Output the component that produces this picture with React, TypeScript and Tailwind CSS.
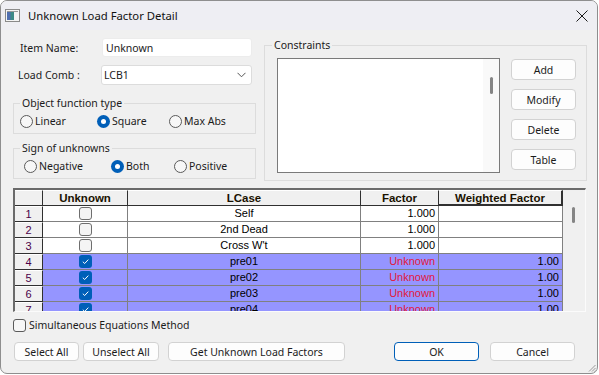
import React from "react";

type Row = { n: number; checked: boolean; lcase: string; factor: string; weighted: string; hl: boolean };

const ROWS: Row[] = [
  { n: 1, checked: false, lcase: "Self", factor: "1.000", weighted: "", hl: false },
  { n: 2, checked: false, lcase: "2nd Dead", factor: "1.000", weighted: "", hl: false },
  { n: 3, checked: false, lcase: "Cross W't", factor: "1.000", weighted: "", hl: false },
  { n: 4, checked: true, lcase: "pre01", factor: "Unknown", weighted: "1.00", hl: true },
  { n: 5, checked: true, lcase: "pre02", factor: "Unknown", weighted: "1.00", hl: true },
  { n: 6, checked: true, lcase: "pre03", factor: "Unknown", weighted: "1.00", hl: true },
  { n: 7, checked: true, lcase: "pre04", factor: "Unknown", weighted: "1.00", hl: true },
];

function Radio({ on, label, width }: { on?: boolean; label: string; width: string }) {
  return (
    <div className={`flex items-center ${width}`}>
      {on ? (
        <span className="w-[13px] h-[13px] rounded-full bg-[#005fb8] flex items-center justify-center">
          <span className="w-[5px] h-[5px] rounded-full bg-white" />
        </span>
      ) : (
        <span className="w-[13px] h-[13px] rounded-full border border-[#5a5a5a] bg-[#f7f7f7]" />
      )}
      <span className="ml-[2px]">{label}</span>
    </div>
  );
}

function Check({ on }: { on: boolean }) {
  if (on)
    return (
      <span className="w-[13px] h-[13px] rounded-[3px] bg-[#005fb8] flex items-center justify-center">
        <svg width="9" height="9" viewBox="0 0 9 9">
          <path d="M1.8 4.7 L3.7 6.5 L7.3 2.6" fill="none" stroke="white" strokeWidth="1" />
        </svg>
      </span>
    );
  return <span className="w-[13px] h-[13px] rounded-[3px] border border-[#6e6e6e] bg-[#f4f4f4]" />;
}

function Btn({ children, w, primary }: { children: React.ReactNode; w: string; primary?: boolean }) {
  return (
    <button
      className={`${w} flex items-center justify-center rounded-[4px] bg-[#fdfdfd] text-[#1b1b1b] ${
        primary ? "border border-[#005fb8]" : "border border-[#d2d2d2]"
      }`}
    >
      {children}
    </button>
  );
}

export default function App() {
  return (
    <div className="w-[599px] h-[375px] bg-white">
      <div
        className="w-[598px] h-[374px] bg-[#f0f0f0] border border-[#8e8e8e] rounded-[7px] overflow-hidden text-[10.5px] text-[#1b1b1b] leading-[14px] flex flex-col"
        style={{ fontFamily: '"Noto Sans", "Segoe UI", sans-serif' }}
      >
        {/* Title bar */}
        <div className="h-[29px] shrink-0 bg-[#eeeef3] flex items-center pl-[4px] pr-[9px]">
          <svg width="15" height="13" viewBox="0 0 15 13">
            <rect x="0.5" y="0.5" width="14" height="12" fill="#f4f4f4" stroke="#8a8a8a" />
            <rect x="2" y="3" width="7" height="8" fill="#3d8a86" />
            <rect x="2" y="3" width="3.5" height="8" fill="#4f6fb0" />
            <rect x="2" y="2" width="11" height="1" fill="#9a9a9a" />
          </svg>
          <span className="ml-[8px] text-[11.3px] text-[#111]">Unknown Load Factor Detail</span>
          <svg className="ml-auto" width="12" height="12" viewBox="0 0 12 12">
            <path d="M0.5 0.5 L11.5 11.5 M11.5 0.5 L0.5 11.5" stroke="#1a1a1a" strokeWidth="1" />
          </svg>
        </div>

        {/* Top section */}
        <div className="flex items-start pl-[12px]">
          {/* Left column */}
          <div className="w-[243px] flex flex-col pt-[8px]">
            <div className="flex items-center h-[19px]">
              <span className="w-[89px] pl-[7px]">Item Name:</span>
              <div className="w-[150px] h-[19px] bg-white border border-[#ececec] rounded-[3px] flex items-center pl-[3px]">
                Unknown
              </div>
            </div>
            <div className="flex items-center h-[20px] mt-[8px]">
              <span className="w-[88px] pl-[5px]">Load Comb :</span>
              <div className="w-[151px] h-[20px] bg-white border border-[#dcdcdc] rounded-[3px] flex items-center pl-[2px] pr-[5px]">
                <span>LCB1</span>
                <svg className="ml-auto" width="9" height="6" viewBox="0 0 9 6">
                  <path d="M0.5 0.8 L4.5 4.8 L8.5 0.8" fill="none" stroke="#555" strokeWidth="1" />
                </svg>
              </div>
            </div>
            <fieldset className="mt-[11px] h-[38px] border border-[#dcdcdc] px-0">
              <legend className="ml-[6px] px-[2px]">Object function type</legend>
              <div className="flex items-center mt-[4px] pl-[6px]">
                <Radio label="Linear" width="w-[77px]" />
                <Radio on label="Square" width="w-[72px]" />
                <Radio label="Max Abs" width="w-[80px]" />
              </div>
            </fieldset>
            <fieldset className="mt-[7px] h-[38px] border border-[#dcdcdc] px-0">
              <legend className="ml-[6px] px-[2px]">Sign of unknowns</legend>
              <div className="flex items-center mt-[4px] pl-[10px]">
                <Radio label="Negative" width="w-[87px]" />
                <Radio on label="Both" width="w-[63px]" />
                <Radio label="Positive" width="w-[70px]" />
              </div>
            </fieldset>
          </div>

          {/* Constraints */}
          <fieldset className="ml-[8px] mt-[8px] w-[323px] h-[143px] border border-[#dcdcdc] px-0">
            <legend className="ml-[7px] px-[2px]">Constraints</legend>
            <div className="flex items-start mt-[6px] pl-[12px]">
              <div className="w-[223px] h-[115px] bg-white border border-[#7a7a7a] flex justify-end">
                <div className="w-[16px] h-full bg-[#f9f9f9] flex justify-center pt-[18px]">
                  <div className="w-[3px] h-[17px] rounded-full bg-[#858585]" />
                </div>
              </div>
              <div className="ml-[11px] mt-[1px] flex flex-col gap-[9px]">
                <Btn w="w-[65px] h-[21px]">Add</Btn>
                <Btn w="w-[65px] h-[21px]">Modify</Btn>
                <Btn w="w-[65px] h-[21px]">Delete</Btn>
                <Btn w="w-[65px] h-[21px]">Table</Btn>
              </div>
            </div>
          </fieldset>
        </div>

        {/* Grid */}
        <div
          className="ml-[12px] mt-[7px] w-[573px] h-[124px] shrink-0 border-t-2 border-l-2 border-[#6a6a6a] border-r border-r-[#fbfbfb] border-b border-b-[#fbfbfb] flex overflow-hidden text-[11px] leading-[15px] text-black"
          style={{ fontFamily: '"Liberation Sans", Arial, sans-serif' }}
        >
          <div className="w-[548px] flex flex-col">
            <div className="flex h-[16px] shrink-0 bg-[#f0f0f0] font-bold text-[11.5px] text-[#1a1200]">
              <div className="w-[28px] border-r border-b border-[#303030] border-t border-t-white" />
              <div className="w-[85px] border-r border-b border-[#303030] border-t border-t-white text-center">Unknown</div>
              <div className="w-[233px] border-r border-b border-[#303030] border-t border-t-white text-center">LCase</div>
              <div className="w-[78px] border-r border-b border-[#303030] border-t border-t-white text-center">Factor</div>
              <div className="w-[124px] border-r-2 border-b-2 border-[#303030] border-t border-t-white text-center">Weighted Factor</div>
            </div>
            {ROWS.map((r) => (
              <div key={r.n} className={`flex h-[16px] shrink-0 ${r.hl ? "bg-[#9595ff]" : "bg-white"}`}>
                <div className="w-[28px] bg-[#f0f0f0] border-r border-b border-[#303030] border-t border-t-white text-center text-[#4a0048]">
                  {r.n}
                </div>
                <div className="w-[85px] border-r border-b border-[#808080] flex items-center justify-center">
                  <Check on={r.checked} />
                </div>
                <div className="w-[233px] border-r border-b border-[#808080] text-center">{r.lcase}</div>
                <div
                  className={`w-[78px] border-r border-b border-[#808080] text-right pr-[3px] ${
                    r.hl ? "text-[#e3183c]" : ""
                  }`}
                >
                  {r.factor}
                </div>
                <div className="w-[124px] border-r border-b border-[#808080] text-right pr-[3px]">{r.weighted}</div>
              </div>
            ))}
          </div>
          <div className="w-[20px] bg-[#f0f0f0] flex justify-center pt-[17px] pl-[1px]">
            <div className="w-[3px] h-[16px] rounded-full bg-[#858585]" />
          </div>
        </div>

        {/* Simultaneous */}
        <div className="flex items-center ml-[12px] mt-[6px]">
          <span className="w-[13px] h-[13px] rounded-[3px] border border-[#5a5a5a] bg-[#f7f7f7]" />
          <span className="ml-[3px]">Simultaneous Equations Method</span>
        </div>

        {/* Bottom buttons */}
        <div className="flex items-center ml-[13px] mt-[10px] h-[19px]">
          <Btn w="w-[65px] h-[19px]">Select All</Btn>
          <div className="ml-[4px]">
            <Btn w="w-[76px] h-[19px]">Unselect All</Btn>
          </div>
          <div className="ml-[9px]">
            <Btn w="w-[177px] h-[19px]">Get Unknown Load Factors</Btn>
          </div>
          <div className="ml-[49px]">
            <Btn primary w="w-[85px] h-[19px]">OK</Btn>
          </div>
          <div className="ml-[11px]">
            <Btn w="w-[85px] h-[19px]">Cancel</Btn>
          </div>
        </div>

        {/* Resize grip */}
        <div className="mt-auto flex justify-end pr-[1px] pb-[1px]">
          <svg width="8" height="8" viewBox="0 0 8 8">
            <path d="M7.5 1 L1 7.5 M7.5 4 L4 7.5 M7.5 6.5 L6.5 7.5" stroke="#9a9a9a" strokeWidth="1" />
          </svg>
        </div>
      </div>
    </div>
  );
}
